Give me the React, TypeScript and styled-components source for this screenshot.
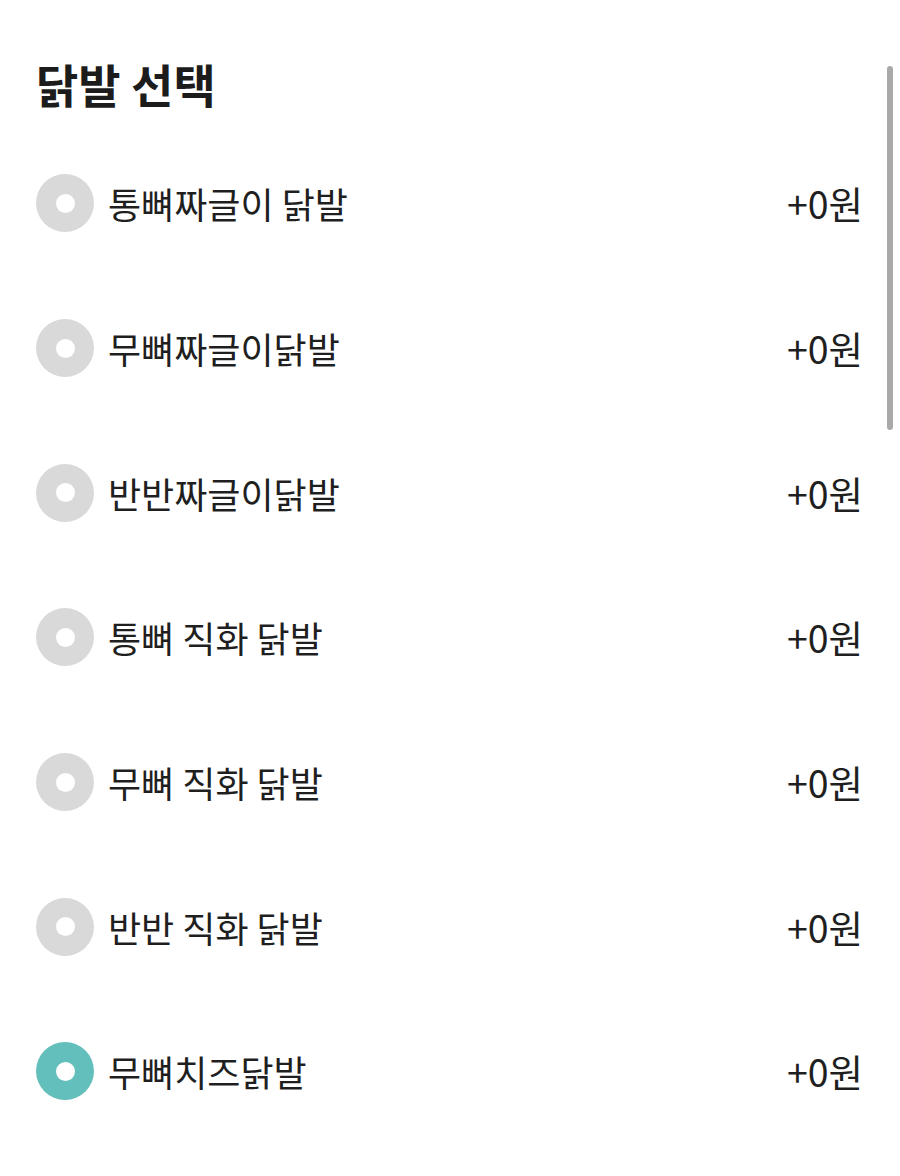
import styled, { createGlobalStyle } from 'styled-components';

const GlobalStyle = createGlobalStyle`
  html, body {
    margin: 0;
    padding: 0;
    background: #ffffff;
  }
  body {
    font-family: "Noto Sans CJK KR", "Noto Sans", sans-serif;
    color: #1f1f1f;
  }
`;

type Option = {
  name: string;
  price: number;
};

const OPTIONS: Option[] = [
  { name: '통뼈짜글이 닭발', price: 0 },
  { name: '무뼈짜글이닭발', price: 0 },
  { name: '반반짜글이닭발', price: 0 },
  { name: '통뼈 직화 닭발', price: 0 },
  { name: '무뼈 직화 닭발', price: 0 },
  { name: '반반 직화 닭발', price: 0 },
  { name: '무뼈치즈닭발', price: 0 },
];

const SELECTED = 6;

const App = () => {
  return (
    <>
      <GlobalStyle />
      <Sheet>
        <Title>닭발 선택</Title>
        <OptionList>
          {OPTIONS.map((option, i) => (
            <OptionRow key={option.name}>
              <Radio $checked={i === SELECTED}>
                <RadioDot />
              </Radio>
              <OptionName>{option.name}</OptionName>
              <OptionPrice>+{option.price}원</OptionPrice>
            </OptionRow>
          ))}
        </OptionList>
        <ScrollThumb />
      </Sheet>
    </>
  );
};

const Sheet = styled.div`
  position: relative;
  width: 900px;
  height: 1176px;
  overflow: hidden;
  box-sizing: border-box;
  padding: 55px 37px 0 36px;
`;

const Title = styled.h2`
  margin: 0;
  font-size: 46px;
  line-height: 56px;
  font-weight: 700;
  letter-spacing: 0;
  color: #1c1c1c;
`;

const OptionList = styled.ul`
  list-style: none;
  margin: 20px 0 0;
  padding: 0;
`;

const OptionRow = styled.li`
  display: flex;
  align-items: center;
  height: 144.7px;
`;

const Radio = styled.span<{ $checked?: boolean }>`
  display: flex;
  align-items: center;
  justify-content: center;
  flex: none;
  width: 58px;
  height: 58px;
  border-radius: 50%;
  background: ${p => (p.$checked ? '#62bfbb' : '#d9d9d9')};
`;

const RadioDot = styled.span`
  width: 19px;
  height: 19px;
  border-radius: 50%;
  background: #ffffff;
`;

const OptionName = styled.span`
  flex: 1;
  margin-left: 14px;
  font-size: 36px;
  line-height: 48px;
  font-weight: 400;
  color: #1f1f1f;
`;

const OptionPrice = styled.span`
  font-size: 37.5px;
  line-height: 48px;
  font-weight: 400;
  color: #1f1f1f;
`;

const ScrollThumb = styled.div`
  position: absolute;
  top: 66px;
  right: 7px;
  width: 6px;
  height: 364px;
  border-radius: 3px;
  background: #a9a9a9;
`;

export default App;
